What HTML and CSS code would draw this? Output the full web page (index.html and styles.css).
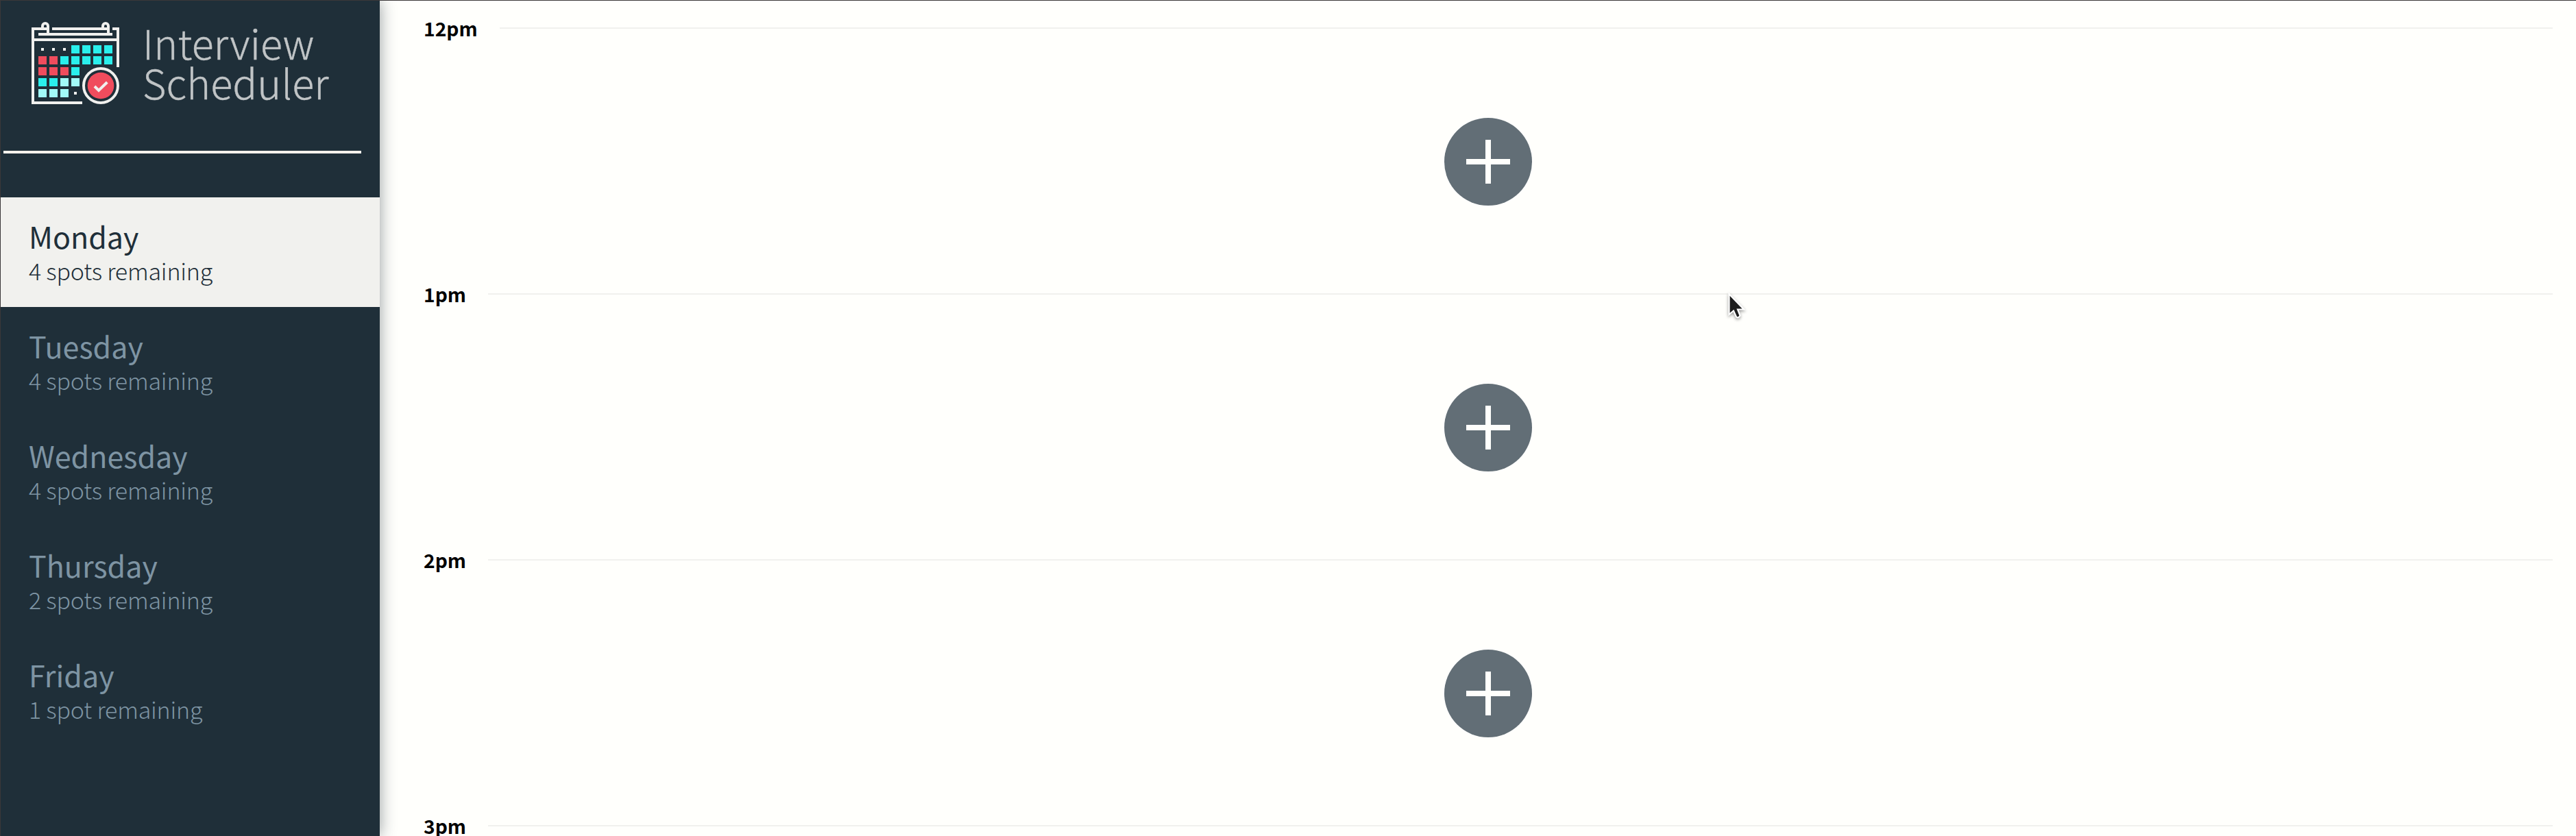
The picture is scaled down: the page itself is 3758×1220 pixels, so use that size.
FILE: index.html
```html
<!DOCTYPE html>
<html lang="en">
<head>
<meta charset="utf-8">
<title>Interview Scheduler</title>
<link rel="stylesheet" href="styles.css">
</head>
<body>
<main class="layout">
  <section class="sidebar">
    <div class="brand">
      <svg class="brand-icon" viewBox="48 36 384 360" fill="none" stroke="#f0f0ee" stroke-width="12">
        <path d="M120 66H54V390H270M402 66H426V234M138 66H384M78 90H402M54 114H426"/>
        <path d="M96 66V54a12 12 0 0 1 24 0V90M360 66V54a12 12 0 0 1 24 0V90"/>
        <g stroke="none">
          <path fill="#f0f0ee" d="M90 150h12v12h-12zM138 150h12v12h-12zM186 150h12v12h-12zM234 342h12v12h-12z"/>
          <path fill="#2aefec" d="M222 138h36v36h-36zM270 138h36v36h-36zM318 138h36v36h-36zM366 138h36v36h-36zM174 186h36v36h-36zM222 186h36v36h-36zM270 186h36v36h-36zM318 186h36v36h-36zM366 186h36v36h-36zM222 234h36v36h-36zM78 282h36v36h-36zM126 282h36v36h-36z"/>
          <path fill="#f04c5d" d="M78 186h36v36h-36zM126 186h36v36h-36zM78 234h36v36h-36zM126 234h36v36h-36zM174 234h36v36h-36z"/>
          <path fill="#a2faf7" d="M174 282h36v36h-36zM222 282h36v36h-36zM78 330h36v36h-36zM126 330h36v36h-36zM174 330h36v36h-36z"/>
        </g>
        <circle cx="351" cy="315" r="75"/>
        <circle cx="351" cy="315" r="58" fill="#f04c5d" stroke="none"/>
        <path d="M324 318l18 18 37-36"/>
      </svg>
      <h1 class="brand-name">Interview<br>Scheduler</h1>
    </div>
    <hr class="separator">
    <ul class="days">
      <li class="day day-selected"><h2>Monday</h2><h3>4 spots remaining</h3></li>
      <li class="day"><h2>Tuesday</h2><h3>4 spots remaining</h3></li>
      <li class="day"><h2>Wednesday</h2><h3>4 spots remaining</h3></li>
      <li class="day"><h2>Thursday</h2><h3>2 spots remaining</h3></li>
      <li class="day"><h2>Friday</h2><h3>1 spot remaining</h3></li>
    </ul>
  </section>
  <section class="schedule">
    <article class="slot">
      <header class="slot-time"><h4>12pm</h4><hr></header>
      <svg class="add" viewBox="0 0 128 128"><circle cx="64" cy="64" r="64"/><path d="M32 64H96M64 32V96"/></svg>
    </article>
    <article class="slot">
      <header class="slot-time"><h4>1pm</h4><hr></header>
      <svg class="add" viewBox="0 0 128 128"><circle cx="64" cy="64" r="64"/><path d="M32 64H96M64 32V96"/></svg>
    </article>
    <article class="slot">
      <header class="slot-time"><h4>2pm</h4><hr></header>
      <svg class="add" viewBox="0 0 128 128"><circle cx="64" cy="64" r="64"/><path d="M32 64H96M64 32V96"/></svg>
    </article>
    <article class="slot slot-last">
      <header class="slot-time"><h4>3pm</h4><hr></header>
    </article>
  </section>
</main>
<svg class="cursor" viewBox="0 0 30 44"><path d="M4.5 4V34L11 28.500L15 37.500Q18 40 20.500 35.500L17 26.500H26Z"/></svg>
</body>
</html>
```
FILE: styles.css
```css
* {
  box-sizing: border-box;
  margin: 0;
  padding: 0;
}

body {
  height: 1220px;
  overflow: hidden;
  background: #fffffc;
  border-top: 1px solid #3b3839;
  border-left: 1px solid #3b3839;
  font-family: "Noto Sans CJK SC", "Noto Sans", sans-serif;
}

.layout {
  display: flex;
  height: 100%;
  overflow: hidden;
}

.sidebar {
  width: 553px;
  flex: none;
  background: #1f2f39;
  box-shadow: 0 0 22px rgba(31, 47, 57, 0.48);
}

.brand {
  display: flex;
  height: 219px;
  padding: 31px 0 0 45px;
}

.brand-icon {
  width: 128px;
  height: 120px;
}

.brand-name {
  margin: 0 0 0 34px;
  color: #c0c4c6;
  font-size: 59.2px;
  font-weight: 300;
  letter-spacing: 0.2px;
  line-height: 58px;
  -webkit-text-stroke: 0.4px #c0c4c6;
}

.separator {
  width: 522px;
  height: 4px;
  margin-left: 4px;
  border: 0;
  background: #f5f1ec;
}

.days {
  margin-top: 64px;
  list-style: none;
}

.day {
  height: 160px;
  padding: 30px 0 0 41px;
  color: #7e94a3;
}

.day-selected {
  background: #f1f1ee;
  color: #1f2f39;
}

.day h2 {
  font-size: 43px;
  font-weight: 400;
  line-height: 52px;
}

.day h3 {
  margin-top: 3px;
  font-size: 34px;
  font-weight: 200;
  letter-spacing: -0.2px;
  line-height: 44px;
}

.schedule {
  flex: 1;
  padding: 15px 34px 0 64px;
}

.slot {
  display: flex;
  flex-direction: column;
  align-items: center;
  height: 388px;
}

.slot-last {
  height: auto;
}

.slot-time {
  display: flex;
  align-items: center;
  gap: 32px;
  width: 100%;
  height: 50px;
}

.slot-time h4 {
  color: #000;
  font-size: 28.2px;
  font-weight: 700;
  line-height: 50px;
}

.slot-time hr {
  flex: 1;
  height: 2px;
  border: 0;
  background: #f1f1ee;
}

.add {
  width: 128px;
  height: 128px;
  margin-top: 106px;
  fill: #626e76;
  stroke: #fffffc;
  stroke-width: 8;
}

.add circle {
  stroke: none;
}

.cursor {
  position: absolute;
  left: 2518px;
  top: 425px;
  width: 30px;
  height: 44px;
  fill: #1d1d1d;
  stroke: #fff;
  stroke-width: 2.2;
  filter: drop-shadow(0 2px 2px rgba(0, 0, 0, 0.4));
}
```
